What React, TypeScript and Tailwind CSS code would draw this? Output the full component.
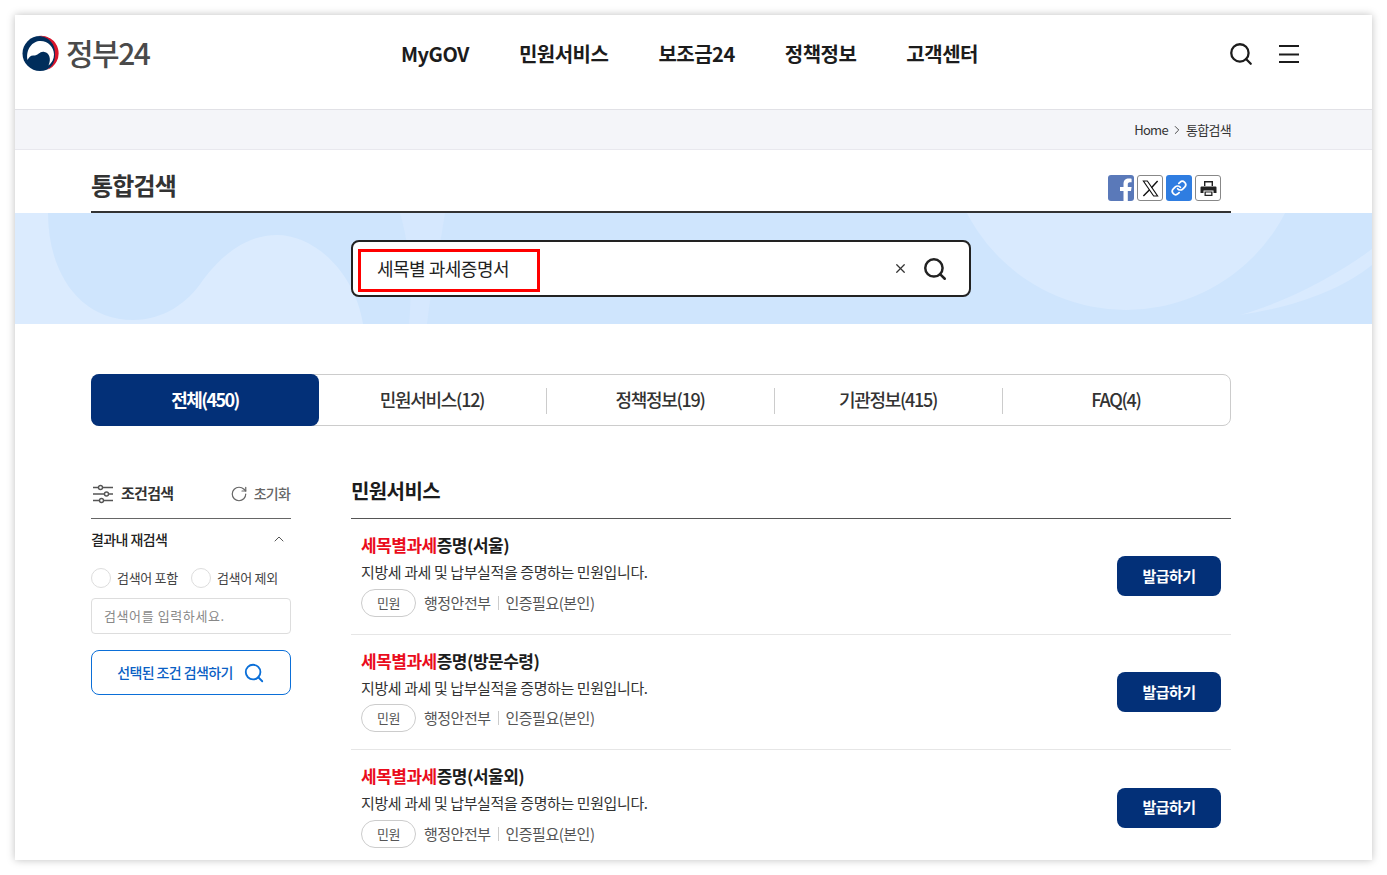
import { Search, X, ChevronUp, ChevronRight, RotateCw, Link as LinkIcon } from "lucide-react";

const nav = ["MyGOV", "민원서비스", "보조금24", "정책정보", "고객센터"];
const tabs = ["전체(450)", "민원서비스(12)", "정책정보(19)", "기관정보(415)", "FAQ(4)"];
const results = ["증명(서울)", "증명(방문수령)", "증명(서울외)"];

function Logo() {
  return (
    <svg width="37" height="37" viewBox="0 0 37 37" className="shrink-0">
      <circle cx="18" cy="18.5" r="17.5" fill="#002d5b" />
      <path d="M16 1.1A17.5 17.5 0 0 1 25 34.8A17 17 0 0 0 32.8 18.5A16 16 0 0 0 16 1.1Z" fill="#d9142b" />
      <path d="M5.5 25C3.5 14 10.5 6 18.5 6C26 6 32 12 32 19.5C32 24 30 28 26.5 30.5C29.5 24 27.5 18 22.4 17C17.4 16 16.4 21 12 20.5C9 20 7 22 5.5 25Z" fill="#fff" />
    </svg>
  );
}

function FilterIcon() {
  return (
    <svg width="20" height="20" viewBox="0 0 20 20" fill="none" stroke="#555" strokeWidth="1.4">
      <path d="M0 3.5H5.5M9.5 3.5H20M0 10H11.5M15.5 10H20M0 16.5H6.5M10.5 16.5H20" />
      <circle cx="7.5" cy="3.5" r="2" />
      <circle cx="13.5" cy="10" r="2" />
      <circle cx="8.5" cy="16.5" r="2" />
    </svg>
  );
}

function ResultRow({ suffix, index }: { suffix: string; index: number }) {
  return (
    <li
      className={`flex items-center justify-between px-[10px] ${index === 0 ? "h-[116px]" : "h-[115px]"} ${
        index < 2 ? "border-b border-[#e6e6e6]" : ""
      }`}
    >
      <div className="flex flex-col self-start pt-[14px]">
        <p className="text-[17px] font-bold leading-[24px] tracking-[-0.5px] text-[#1c1c1c]">
          <span className="text-[#ea0c1c]">세목별과세</span>
          {suffix}
        </p>
        <p className="mt-[4px] text-[15px] leading-[22px] tracking-[-0.4px] text-[#333]">
          지방세 과세 및 납부실적을 증명하는 민원입니다.
        </p>
        <div className={`flex items-center text-[#555] ${index === 1 ? "mt-[5px]" : "mt-[6px]"}`}>
          <span className="flex h-[28px] w-[55px] items-center justify-center rounded-full border border-[#ccc] text-[13px] tracking-[-0.4px]">
            민원
          </span>
          <span className="ml-[8px] text-[15px] tracking-[-0.5px]">행정안전부</span>
          <span className="mx-[7px] h-[14px] w-px bg-[#ccc]" />
          <span className="text-[15px] tracking-[-0.5px]">인증필요(본인)</span>
        </div>
      </div>
      <button
        className={`h-[40px] w-[104px] rounded-[8px] bg-[#033078] text-[15px] font-bold tracking-[-0.5px] text-white ${
          index === 0 ? "mb-[1px]" : ""
        }`}
      >
        발급하기
      </button>
    </li>
  );
}

export default function App() {
  return (
    <div className="h-[875px] w-[1387px] overflow-hidden bg-white p-[15px] font-['Noto_Sans_CJK_KR','Noto_Sans',sans-serif]">
      <div className="h-[845px] overflow-hidden bg-white shadow-[0_0_8px_rgba(0,0,0,0.25)]">
        <header className="flex h-[95px] items-center border-b border-[#e1e1e6] pb-[17px]">
          <div className="ml-[7px] flex w-[379px] items-center gap-[7px]">
            <Logo />
            <span className="pb-[3px] text-[30px] font-medium leading-none tracking-[-1.5px] text-[#4a4a4a]">정부24</span>
          </div>
          <nav className="flex gap-[50px] text-[20px] font-bold tracking-[-0.5px] text-[#1c1c1c]">
            {nav.map((n) => (
              <a key={n}>{n}</a>
            ))}
          </nav>
          <div className="ml-auto mr-[73px] flex items-center gap-[25px] text-[#1c1c1c]">
            <Search size={26} strokeWidth={2.1} />
            <svg width="20" height="18" viewBox="0 0 20 18" stroke="currentColor" strokeWidth="2">
              <path d="M0 1H20M0 9.5H20M0 17H20" />
            </svg>
          </div>
        </header>

        <div className="flex h-[40px] items-center justify-end gap-[2px] border-b border-[#e8e8ee] bg-[#f4f5f9] pr-[141px] text-[13px] tracking-[-0.7px] text-[#333]">
          <span>Home</span>
          <ChevronRight size={14} strokeWidth={1.5} />
          <span>통합검색</span>
        </div>

        <div className="ml-[76px] mr-[141px] flex h-[63px] items-end justify-between border-b-2 border-[#333] pb-[8px]">
          <h1 className="text-[24px] font-bold leading-[36px] tracking-[-0.8px] text-[#333]">통합검색</h1>
          <div className="mb-[2px] mr-[10px] flex gap-[3px]">
            <span className="flex h-[26px] w-[26px] items-end justify-end overflow-hidden rounded-[3px] bg-[#5a79b9]">
              <svg width="16" height="24" viewBox="0 0 15 24">
                <path d="M5 24V14H1.5v-4H5V7c0-3.6 2.2-5.4 5.3-5.4 1.4 0 2.8.2 2.8.2v3.4h-1.7C9.8 5.2 9.3 6.2 9.3 7.2V10h3.8l-.6 4H9.3v10z" fill="#fff" />
              </svg>
            </span>
            <span className="flex h-[26px] w-[26px] items-center justify-center rounded-[3px] border border-[#888] bg-white">
              <svg width="19" height="19" viewBox="0 0 24 24" fill="none" stroke="#111" strokeWidth="1.4">
                <path d="M3 2.5h5l13 19h-5z" />
                <path d="M21 2.5 13.2 11M10.8 13.6 3 21.5" strokeWidth="1.8" />
              </svg>
            </span>
            <span className="flex h-[26px] w-[26px] items-center justify-center rounded-[3px] bg-[#2f7de1] text-white">
              <LinkIcon size={16} strokeWidth={2.6} />
            </span>
            <span className="flex h-[26px] w-[26px] items-center justify-center rounded-[3px] border border-[#888] bg-white">
              <svg width="17" height="17" viewBox="0 0 17 17" fill="#222">
                <path d="M4 1h9v5h-1.4V2.4H5.4V6H4z" />
                <path d="M1.5 6.5h14a1 1 0 0 1 1 1V13h-3v-2.5h-10V13h-3V7.5a1 1 0 0 1 1-1z" />
                <path d="M4.5 11.5h8V16h-8zM5.8 12.6v2.2h5.4v-2.2z" fillRule="evenodd" />
              </svg>
            </span>
          </div>
        </div>

        <section className="relative flex h-[111px] items-start overflow-hidden bg-[#cfe5fd] pl-[336px] pt-[27px]">
          <svg className="absolute left-0 top-0" width="1357" height="111" viewBox="0 0 1357 111">
            <path d="M0 0H33C33 60 65 107 118 107C148 107 173 90 188 67C212 35 237 22 262 22C300 22 340 60 348 111H0Z" fill="#dbebfe" />
            <path d="M385 0H430C424 40 416 75 412 111H394C398 70 394 30 385 0Z" fill="#d6e8fe" />
            <circle cx="1111" cy="-82" r="179" fill="#d9eafe" />
            <path d="M1225 102C1275 88 1325 60 1357 36V52C1325 78 1275 95 1225 102Z" fill="#d9eafe" />
          </svg>
          <div className="relative flex h-[57px] w-[620px] items-center rounded-[8px] border-2 border-[#222] bg-white pl-[24px] pr-[21px]">
            <span className="text-[18px] tracking-[-0.5px] text-[#222]">세목별 과세증명서</span>
            <X size={15} strokeWidth={2} className="ml-auto mr-[14px] text-[#333]" />
            <Search size={26} strokeWidth={2.3} className="text-[#222]" />
            <div className="absolute left-[5px] top-[7px] h-[43px] w-[182px] border-[3px] border-[#f00]" />
          </div>
        </section>

        <div className="ml-[76px] mr-[141px] mt-[50px]">
          <ul className="flex h-[52px] rounded-[8px] border border-[#ccc] text-[18px] font-medium tracking-[-1.3px] text-[#333]">
            {tabs.map((t, i) => (
              <li
                key={t}
                className={`relative flex flex-1 items-center justify-center pb-[1px] ${
                  i === 0 ? "-my-px -ml-px -mr-px rounded-[8px] bg-[#033078] font-bold tracking-[-1.6px] text-white" : ""
                }`}
              >
                {t}
                {i > 1 && <span className="absolute left-0 top-[13px] h-[26px] w-px bg-[#ccc]" />}
              </li>
            ))}
          </ul>

          <div className="mt-[48px] flex gap-[60px]">
            <aside className="w-[200px] shrink-0">
              <div className="flex h-[45px] items-center justify-between border-b border-[#666] pb-[5px]">
                <div className="flex items-center gap-[8px] pl-[2px]">
                  <FilterIcon />
                  <span className="text-[15px] font-bold tracking-[-0.7px] text-[#333]">조건검색</span>
                </div>
                <div className="flex items-center gap-[6px] pr-[1px] text-[#666]">
                  <RotateCw size={18} strokeWidth={1.6} />
                  <span className="text-[14px] font-medium tracking-[-0.8px]">초기화</span>
                </div>
              </div>
              <div className="flex h-[40px] items-center justify-between pr-[4px]">
                <span className="text-[14px] font-medium tracking-[-0.6px] text-[#222]">결과내 재검색</span>
                <ChevronUp size={16} strokeWidth={1.5} className="text-[#555]" />
              </div>
              <div className="mt-[9px] flex items-center text-[13px] tracking-[-0.3px] text-[#444]">
                <span className="h-[20px] w-[20px] rounded-full border border-[#ddd]" />
                <span className="ml-[6px]">검색어 포함</span>
                <span className="ml-[13px] h-[20px] w-[20px] rounded-full border border-[#ddd]" />
                <span className="ml-[6px]">검색어 제외</span>
              </div>
              <div className="mt-[10px] flex h-[36px] items-center rounded-[4px] border border-[#ddd] pl-[12px] text-[13px] tracking-[0.6px] text-[#888]">
                검색어를 입력하세요.
              </div>
              <button className="mt-[16px] flex h-[45px] w-full items-center justify-center gap-[10px] rounded-[8px] border border-[#0b6fd8] text-[14px] font-medium tracking-[-0.6px] text-[#0b5fc4]">
                선택된 조건 검색하기
                <Search size={22} strokeWidth={2} className="text-[#0b6fd8]" />
              </button>
            </aside>

            <main className="min-w-0 flex-1">
              <h2 className="flex h-[45px] items-center border-b border-[#555] pb-[10px] text-[20px] font-bold tracking-[-0.6px] text-[#1c1c1c]">
                민원서비스
              </h2>
              <ul>
                {results.map((r, i) => (
                  <ResultRow key={r} suffix={r} index={i} />
                ))}
              </ul>
            </main>
          </div>
        </div>
      </div>
    </div>
  );
}
